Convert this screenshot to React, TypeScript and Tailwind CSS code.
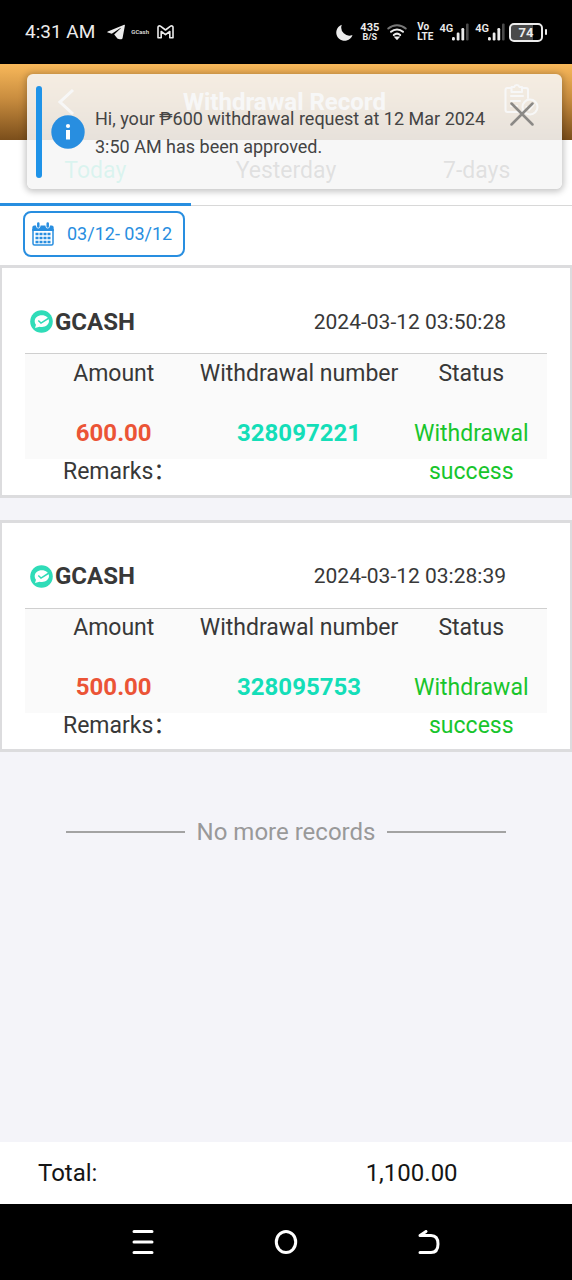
import React from 'react';

interface WithdrawalRecord {
  id: string;
  channel: string;
  createdAt: string;
  amount: string;
  status: string;
}

const records: WithdrawalRecord[] = [
  { id: '328097221', channel: 'GCASH', createdAt: '2024-03-12 03:50:28', amount: '600.00', status: 'Withdrawal success' },
  { id: '328095753', channel: 'GCASH', createdAt: '2024-03-12 03:28:39', amount: '500.00', status: 'Withdrawal success' },
];

const tabs = ['Today', 'Yesterday', '7-days'];

const Signal = () => (
  <div className="flex items-start">
    <span className="text-[11px] leading-3 font-semibold">4G</span>
    <svg className="w-[17px] h-[18px] -ml-px" viewBox="0 0 17 18" fill="currentColor">
      <rect x="0" y="14" width="2.8" height="3.5" rx="1.2" />
      <rect x="4.7" y="9.5" width="2.8" height="8" rx="1.2" />
      <rect x="9.4" y="5" width="2.8" height="12.5" rx="1.2" />
      <rect x="14" y="0.5" width="2.6" height="17" rx="1.1" fill="#4a4a4a" />
    </svg>
  </div>
);

const StatusBar = () => (
  <div className="h-16 bg-black text-[#ececec] flex items-center justify-between px-[25px]">
    <div className="flex items-center">
      <span className="text-[19px] leading-6">4:31 AM</span>
      <svg className="w-[18px] h-4 ml-3" viewBox="0 0 18 16" fill="currentColor">
        <path d="M17.2.7.8 7.4c-.7.3-.6 1 .1 1.2l3.9 1.2L13.4 4c.4-.3.7 0 .4.3L7.2 10.4l3.2 4.1c.4.4 3 1.1 4.1.8.7-.2 1-.7 1.1-1.3L17.9 1.4c.1-.6-.2-.9-.7-.7Z" />
      </svg>
      <span className="ml-1.5 text-[6px] leading-3 font-medium">GCash</span>
      <svg className="w-[17px] h-[14px] ml-2" viewBox="0 0 17 14" fill="none" stroke="currentColor" strokeWidth="1.6" strokeLinejoin="round">
        <path d="M1 2.3v10.5h3.2V6.5l4.3 3.2 4.3-3.2v6.3H16V2.3C16 1 14.5.4 13.5 1.2L8.5 5l-5-3.8C2.5.4 1 1 1 2.3Z" />
      </svg>
    </div>
    <div className="flex items-center">
      <svg className="w-[17px] h-[17px]" viewBox="0 0 17 17" fill="currentColor">
        <path d="M5.8.7A8.3 8.3 0 1 0 16.5 11 8.1 8.1 0 0 1 5.8.7Z" />
      </svg>
      <div className="ml-[7px] flex flex-col items-center font-bold">
        <span className="text-[11px] leading-[11px]">435</span>
        <span className="text-[9px] leading-[9px]">B/S</span>
      </div>
      <svg className="w-5 h-4 ml-2" viewBox="0 0 20 16" fill="none" stroke="currentColor" strokeWidth="2" strokeLinecap="round">
        <path d="M1.3 4.5c5-4.5 12.4-4.5 17.4 0" stroke="#777" />
        <path d="M4 7.8c3.5-3.2 8.500-3.2 12 0M6.8 11c2-1.7 4.4-1.7 6.4 0" />
        <path d="m8.9 13.5 1.1 1.2 1.1-1.2Z" fill="currentColor" />
      </svg>
      <div className="ml-2.5 flex flex-col text-[10px] leading-[10px] font-bold">
        <span>Vo</span>
        <span>LTE</span>
      </div>
      <div className="ml-1.5 flex gap-1.5">
        <Signal />
        <Signal />
      </div>
      <div className="ml-1 flex items-center gap-0.5">
        <div className="w-[34px] h-[19px] rounded-[5px] border-2 border-[#ececec] bg-[linear-gradient(90deg,#4a4a4a_74%,#000_74%)] text-[13px] leading-[15px] font-bold text-center">74</div>
        <div className="w-0.5 h-1.5 rounded-sm bg-[#ececec]" />
      </div>
    </div>
  </div>
);

const Notification = () => (
  <div
    role="alert"
    className="absolute left-[27px] right-[10px] top-[74px] h-[115px] rounded-md bg-[#f6f6f6]/88 shadow-[0_1px_6px_2px_rgba(0,0,0,0.22)] flex items-start pl-[9px] pr-7"
  >
    <div className="w-1.5 h-[92px] mt-3 rounded-full bg-[#1f93e8] shrink-0" />
    <svg className="w-[34px] h-[34px] mt-[41px] ml-[9px] shrink-0" viewBox="0 0 34 34">
      <circle cx="17" cy="17" r="16.7" fill="#288ee0" />
      <circle cx="17" cy="11" r="2.1" fill="#fff" />
      <path d="M15 15h4v9.500h-4Z" fill="#fff" />
    </svg>
    <p className="ml-2.5 mt-[31px] grow text-lg leading-7 text-[#444]">
      Hi, your ₱600 withdrawal request at 12 Mar 2024 3:50 AM has been approved.
    </p>
    <button type="button" aria-label="Close" className="mt-7 shrink-0 cursor-pointer">
      <svg className="w-6 h-6" viewBox="0 0 24 24" stroke="#8b8986" strokeWidth="2.5" strokeLinecap="round">
        <path d="m1.5 1.5 21 21M22.5 1.5l-21 21" />
      </svg>
    </button>
  </div>
);

const Header = () => (
  <header className="h-[76px] bg-[linear-gradient(#f8b85a,#c98d3f_45%,#7b4e1b)] text-white flex items-center pl-[56px] pr-[33px]">
    <div className="w-[127px] flex">
      <button type="button" aria-label="Back" className="cursor-pointer">
        <svg className="w-5 h-7" viewBox="0 0 20 28" fill="none" stroke="currentColor" strokeWidth="3">
          <path d="M17 2 4 14l13 12" />
        </svg>
      </button>
    </div>
    <h1 className="text-2xl font-bold">Withdrawal Record</h1>
    <div className="grow flex justify-end">
      <button type="button" aria-label="Audit records" className="cursor-pointer -mt-1">
        <svg className="w-[35px] h-[34px]" viewBox="0 0 35 34" fill="none" stroke="currentColor" strokeWidth="2" strokeLinecap="round" strokeLinejoin="round">
          <path d="M7.5 5h-4q-2 0-2 2v20q0 2 2 2H18M18 5h4q2 0 2 2v8M7.5 4h2.7a2.7 2.7 0 0 1 5.2 0H18v5H7.5ZM7 13h12M7 18h9M7 23h6" />
          <circle cx="26" cy="24" r="7.5" />
          <path d="m22.5 24 2.7 2.7 4.5-5" />
        </svg>
      </button>
    </div>
  </header>
);

const CalendarIcon = () => (
  <svg className="w-[22px] h-6" viewBox="0 0 22 24" fill="none" stroke="currentColor">
    <path d="M1 7v14.5Q1 23 2.5 23h17q1.500 0 1.500-1.500V7" strokeWidth="1.5" />
    <path d="M.3 9V5.500Q.3 3.500 2.300 3.500H4q.3 3 2.300 3t2.300-3h4.800q.3 3 2.300 3t2.300-3h1.700q2 0 2 2V9Z" fill="currentColor" stroke="none" />
    <path d="M6.3 1.500v3M15.700 1.500v3" strokeWidth="2.5" strokeLinecap="round" />
    <path d="M3.500 12h15M3.500 16h15M3.500 20h15" strokeWidth="2.5" strokeDasharray="3 1" />
  </svg>
);

const GcashLogo = () => (
  <svg className="w-[23px] h-[23px]" viewBox="0 0 23 23">
    <circle cx="11.5" cy="11.5" r="11.3" fill="#2fdcb8" />
    <path d="M11.8 5.200c4.200 0 7.200 2.500 7.200 5.900s-3.100 5.900-7 5.900c-.9 0-1.700-.1-2.500-.3L5 18l1-3.200C5.100 13.800 4.700 12.500 4.700 11.100c0-3.400 3.100-5.900 7.100-5.900Z" fill="#fff" />
    <path d="m8.300 10.500 2.700 2.600 8-5.100" fill="none" stroke="#2fdcb8" strokeWidth="1.500" />
  </svg>
);

const RecordCard: React.FC<{ record: WithdrawalRecord }> = ({ record }) => (
  <article className="bg-white border-y-[3px] border-x-2 border-[#dcdcde] px-[23px] pb-1 text-[#383838]">
    <div className="h-[85px] pt-[22px] pl-[5px] pr-[41px] flex items-center justify-between">
      <div className="flex items-center gap-0.5">
        <GcashLogo />
        <h2 className="text-2xl font-bold">{record.channel}</h2>
      </div>
      <time className="text-[21px] leading-8">{record.createdAt}</time>
    </div>
    <table className="w-full table-fixed border-t border-[#cfcfcf] text-[23px] text-center">
      <thead>
        <tr className="h-10 bg-[#fafafa]">
          <th className="w-[34%] p-0 font-normal">Amount</th>
          <th className="w-[37%] p-0 font-normal">
            <div className="flex justify-center whitespace-nowrap">Withdrawal number</div>
          </th>
          <th className="w-[29%] p-0 font-normal">Status</th>
        </tr>
      </thead>
      <tbody className="align-top">
        <tr className="h-[65px]">
          <td className="pt-5 leading-[38px] font-bold text-2xl bg-[#fafafa] text-[#eb5436]">{record.amount}</td>
          <td className="pt-5 leading-[38px] font-bold text-2xl bg-[#fafafa] text-[#14deb8]">{record.id}</td>
          <td rowSpan={2} className="pt-[21px] px-2.5 leading-[38px] text-[#18c52c] bg-[linear-gradient(#fafafa_65px,#fff_65px)]">
            {record.status}
          </td>
        </tr>
        <tr className="h-8">
          <td colSpan={2} className="pl-[38px] text-left leading-[26px]">Remarks：</td>
        </tr>
      </tbody>
    </table>
  </article>
);

export default function App() {
  return (
    <div className="relative min-h-screen flex flex-col bg-[#f4f4f9] font-[Roboto,'Noto_Sans_CJK_SC',sans-serif]">
      <StatusBar />
      <Header />

      <nav className="h-[66px] grid grid-cols-3 bg-white text-[23px]">
        {tabs.map((tab, i) => (
          <button
            key={tab}
            type="button"
            className={`cursor-pointer ${i === 0 ? 'border-b-[3px] border-[#288ee0] text-[#14deb8]' : 'pb-0.5 border-b border-[#d8d8d8] text-[#444]'}`}
          >
            {tab}
          </button>
        ))}
      </nav>

      <div className="bg-white pt-[5px] pb-2 pl-[23px]">
        <button type="button" className="h-[46px] pl-[7px] pr-[11px] flex items-center gap-[13px] border-2 border-[#288ee0] rounded-lg text-[#288ee0] text-lg cursor-pointer">
          <CalendarIcon />
          03/12- 03/12
        </button>
      </div>

      <main className="grow flex flex-col">
        <div className="flex flex-col gap-[22px]">
          {records.map((record) => (
            <RecordCard key={record.id} record={record} />
          ))}
        </div>
        <div className="mt-16 px-[66px] flex items-center gap-3 text-2xl text-[#999]">
          <div className="grow h-0.5 bg-[#a3a3a3]" />
          <span>No more records</span>
          <div className="grow h-0.5 bg-[#a3a3a3]" />
        </div>
      </main>

      <footer className="h-[62px] bg-white flex items-center justify-between pl-[38px] pr-[20%] text-2xl text-[#151515]">
        <span>Total:</span>
        <span>1,100.00</span>
      </footer>

      {/* Android navigation keys */}
      <div className="h-[76px] bg-black text-white px-[12.5%] grid grid-cols-3 place-items-center">
        <button type="button" aria-label="Recent apps">
          <svg className="w-6 h-6" viewBox="0 0 24 24" stroke="currentColor" strokeWidth="3" strokeLinecap="round">
            <path d="M3 1.500h18M3 12h18M3 22.500h18" />
          </svg>
        </button>
        <button type="button" aria-label="Home">
          <svg className="w-6 h-6" viewBox="0 0 24 24" fill="none" stroke="currentColor" strokeWidth="3">
            <ellipse cx="12" cy="12" rx="9.7" ry="10.5" />
          </svg>
        </button>
        <button type="button" aria-label="Back key">
          <svg className="w-6 h-6" viewBox="0 0 24 24" fill="none" stroke="currentColor" strokeWidth="3" strokeLinecap="round" strokeLinejoin="round">
            <path d="M3 22.500h11q7 0 7-8.500t-7-8.500H3l6-4" />
          </svg>
        </button>
      </div>

      <Notification />
    </div>
  );
}
